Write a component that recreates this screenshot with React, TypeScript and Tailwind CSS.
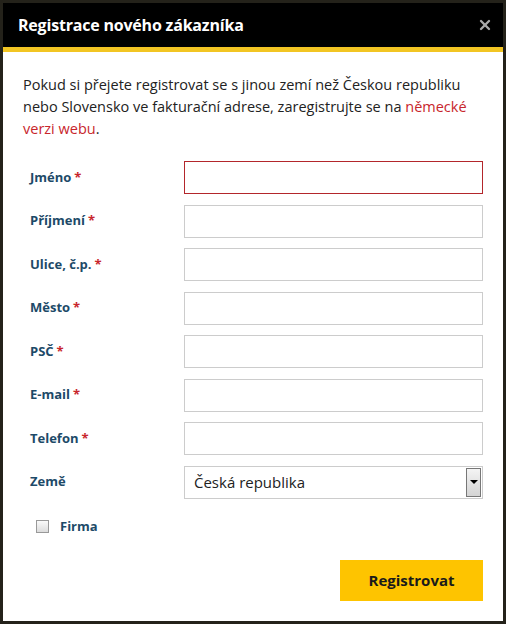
import { X } from 'lucide-react'

const fields = ['Jméno', 'Příjmení', 'Ulice, č.p.', 'Město', 'PSČ', 'E-mail', 'Telefon']

const font = { fontFamily: '"Open Sans", "Noto Sans", sans-serif' }

function Label({ text, required }: { text: string; required?: boolean }) {
  return (
    <label className="w-[161px] shrink-0 pl-[7px] text-[13px] font-bold text-[#1d4a68]">
      {text}
      {required && <span className="ml-[3px] text-[#c8262c]">*</span>}
    </label>
  )
}

export default function App() {
  return (
    <div className="h-[624px] w-[506px] bg-[#24221a] px-[3px] pt-[3px]" style={font}>
      <div className="flex h-[618px] flex-col bg-white">
        <div className="flex h-[44px] shrink-0 items-center justify-between bg-black pl-[15px] pr-[10px]">
          <h1 className="text-[16px] font-bold tracking-[-0.2px] text-white">Registrace nového zákazníka</h1>
          <X className="h-[16px] w-[16px] text-[#a9a9a9]" strokeWidth={3.5} />
        </div>
        <div className="h-[5px] shrink-0 bg-[#f2c523]" />

        <div className="flex flex-1 flex-col px-5 pt-[22px]">
          <p className="text-[14.5px] leading-[22px] text-[#222]">
            Pokud si přejete registrovat se s jinou zemí než Českou republiku nebo Slovensko ve fakturační adrese,
            zaregistrujte se na <a className="text-[#c8262c]">německé verzi webu</a>.
          </p>

          <div className="mt-[21px] flex flex-col gap-[10.5px]">
            {fields.map((f, i) => (
              <div key={f} className="flex items-center">
                <Label text={f} required />
                <input
                  className={`h-[33px] w-[299px] border bg-white outline-none ${
                    i === 0 ? 'border-[#b3262b]' : 'border-[#cccccc]'
                  }`}
                />
              </div>
            ))}
            <div className="flex items-center">
              <Label text="Země" />
              <div className="relative h-[33px] w-[299px] border border-[#cccccc] bg-white">
                <div className="flex h-full items-center pl-[9px] text-[15px] text-[#222]">Česká republika</div>
                <div className="absolute right-[1px] top-[1px] flex h-[29px] w-[15px] items-center justify-center border border-[#777] bg-gradient-to-b from-[#f4f4f4] to-[#d4d4d4]">
                  <div className="h-0 w-0 border-x-[4px] border-t-[4px] border-x-transparent border-t-black" />
                </div>
              </div>
            </div>
          </div>

          <div className="mt-[18px] flex items-center pl-[13px]">
            <div className="h-[13px] w-[13px] border border-[#999] bg-gradient-to-b from-[#fafafa] to-[#dcdcdc]" />
            <span className="ml-[11px] text-[13px] font-bold text-[#1d4a68]">Firma</span>
          </div>

          <div className="mt-[24px] flex justify-end">
            <button className="h-[41px] w-[143px] bg-[#fec400] text-[15px] font-bold text-[#1a1a1a]">Registrovat</button>
          </div>
        </div>
      </div>
    </div>
  )
}
